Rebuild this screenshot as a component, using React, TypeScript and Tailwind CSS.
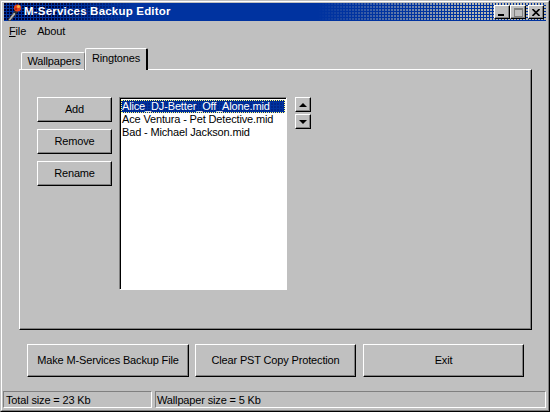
import React from "react";

const raised =
  "border border-t-white border-l-white border-r-black border-b-black bg-[#c0c0c0] shadow-[inset_-1px_-1px_0_#808080] text-black";
const sunken = "border border-t-[#808080] border-l-[#808080] border-r-white border-b-white";

function Btn(props: { label: string; className: string }) {
  return (
    <button className={`${raised} flex items-center justify-center ${props.className}`}>
      {props.label}
    </button>
  );
}

function CapButton(props: { children: React.ReactNode; className?: string }) {
  return (
    <div className={`${raised} flex items-center justify-center ${props.className ?? ""}`}>
      {props.children}
    </div>
  );
}

function TorchIcon() {
  return (
    <svg width="16" height="18" viewBox="0 0 16 18">
      <path d="M2 17 L8 9 L10 11 L4 18 Z" fill="#b0b0b0" stroke="#303030" strokeWidth="0.8" />
      <path d="M8 9 L9.5 6.5 L12 9 L10 11 Z" fill="#303030" />
      <circle cx="11.5" cy="5" r="3.6" fill="#e8401c" />
      <circle cx="12.5" cy="3.5" r="1.6" fill="#f4b040" />
      <circle cx="10" cy="6" r="1.1" fill="#a02010" />
    </svg>
  );
}

export default function App() {
  return (
    <div className="w-[550px] h-[412px] overflow-hidden bg-[#c0c0c0] border border-t-[#c0c0c0] border-l-[#c0c0c0] border-r-black border-b-black font-['Liberation_Sans',Arial,sans-serif] text-[11px] tracking-[-0.15px] text-black flex flex-col">
      <div className="flex-1 flex flex-col border border-t-white border-l-white border-r-[#808080] border-b-[#808080] p-px min-h-0">
        {/* title bar */}
        <div className="h-[18px] mx-px flex items-center pr-[2px] bg-[radial-gradient(circle_at_1px_1px,transparent_1.1px,#0033a0_1.3px),linear-gradient(90deg,#000030_0%,#000030_8%,#0033a0_24%,#0033a0_58%,#b8b8b0_86%)] bg-[size:3px_3px,100%_100%]">
          <div className="w-[20px] pl-[2px] shrink-0">
            <TorchIcon />
          </div>
          <span className="text-white font-bold text-[11.5px] tracking-[0.2px] leading-none">
            M-Services Backup Editor
          </span>
          <div className="ml-auto flex items-center">
            <CapButton className="w-[16px] h-[14px]">
              <div className="w-[6px] h-[2px] bg-black mt-[6px] mr-[2px]" />
            </CapButton>
            <CapButton className="w-[16px] h-[14px]">
              <div className="w-[9px] h-[9px] border border-[#808080] border-t-2" />
            </CapButton>
            <CapButton className="w-[16px] h-[14px] ml-[2px]">
              <svg width="8" height="7" viewBox="0 0 8 7">
                <path d="M0.5 0 L7.5 7 M7.5 0 L0.5 7" stroke="#000" strokeWidth="1.6" />
              </svg>
            </CapButton>
          </div>
        </div>

        {/* menu */}
        <div className="h-[19px] flex items-center gap-[11px] px-[6px] mt-px">
          <span>
            <span className="underline">F</span>ile
          </span>
          <span>About</span>
        </div>

        {/* tabs */}
        <div className="mt-[7px] ml-[18px] flex items-end h-[21px] relative z-10">
          <div className="h-[18px] w-[64px] flex items-center justify-center pl-[2px] border-t border-l border-t-white border-l-white border-r border-r-[#808080] rounded-t-[2px] mb-[-1px]">
            Wallpapers
          </div>
          <div className="h-[22px] w-[63px] flex items-center justify-center bg-[#c0c0c0] border-t border-l border-t-white border-l-white border-r-2 border-r-black rounded-t-[2px] mb-[-1px] pb-[2px]">
            Ringtones
          </div>
        </div>

        {/* tab page */}
        <div className="ml-[16px] mr-[15px] h-[261px] border border-t-white border-l-white border-r-black border-b-black shadow-[inset_-1px_-1px_0_#808080] flex pt-[27px] pl-[17px]">
          <div className="flex flex-col gap-[7px] w-[75px]">
            <Btn label="Add" className="h-[25px]" />
            <Btn label="Remove" className="h-[25px]" />
            <Btn label="Rename" className="h-[25px]" />
          </div>
          <div className={`ml-[7px] w-[168px] h-[193px] bg-white ${sunken} shadow-[inset_1px_1px_0_#000] pl-px pr-px pt-[2px] leading-[13px]`}>
            <div className="bg-[radial-gradient(circle_at_1px_1px,#001060_0.4px,#0033a0_0.9px)] bg-[size:3px_3px] text-white outline outline-dotted outline-[#ffff80] -outline-offset-1 pl-px h-[13px]">
              Alice_DJ-Better_Off_Alone.mid
            </div>
            <div className="pl-px">Ace Ventura - Pet Detective.mid</div>
            <div className="pl-px">Bad - Michael Jackson.mid</div>
          </div>
          <div className="ml-[8px] flex flex-col gap-[2px]">
            <CapButton className="w-[16px] h-[15px]">
              <div className="w-0 h-0 border-x-[4px] border-x-transparent border-b-[4px] border-b-black" />
            </CapButton>
            <CapButton className="w-[16px] h-[15px]">
              <div className="w-0 h-0 border-x-[4px] border-x-transparent border-t-[4px] border-t-black" />
            </CapButton>
          </div>
        </div>

        {/* bottom buttons */}
        <div className="flex mt-[14px] ml-[24px]">
          <Btn label="Make M-Services Backup File" className="w-[162px] h-[33px]" />
          <Btn label="Clear PST Copy Protection" className="ml-[6px] w-[161px] h-[33px]" />
          <Btn label="Exit" className="ml-[7px] w-[161px] h-[33px]" />
        </div>

        {/* status bar */}
        <div className="mt-auto flex gap-[3px] pr-px pb-px h-[18px]">
          <div className={`w-[149px] ${sunken} pl-[2px] pt-px flex items-center`}>Total size = 23 Kb</div>
          <div className={`flex-1 ${sunken} pl-px pt-px flex items-center`}>Wallpaper size = 5 Kb</div>
        </div>
      </div>
    </div>
  );
}
